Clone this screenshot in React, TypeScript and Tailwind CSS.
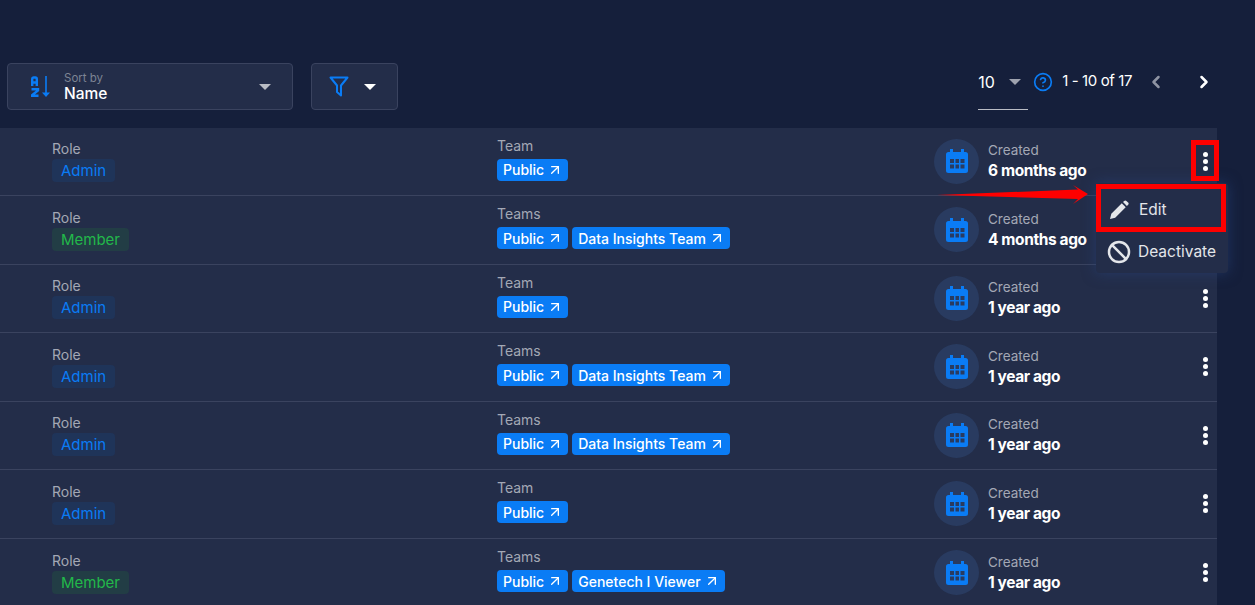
import { ArrowUpRight, ChevronLeft, ChevronRight, CircleHelp, Ban } from 'lucide-react';

const font = "font-['Inter','Noto_Sans',sans-serif]";

type Row = { role: 'Admin' | 'Member'; teams: string[]; created: string };

const rows: Row[] = [
  { role: 'Admin', teams: ['Public'], created: '6 months ago' },
  { role: 'Member', teams: ['Public', 'Data Insights Team'], created: '4 months ago' },
  { role: 'Admin', teams: ['Public'], created: '1 year ago' },
  { role: 'Admin', teams: ['Public', 'Data Insights Team'], created: '1 year ago' },
  { role: 'Admin', teams: ['Public', 'Data Insights Team'], created: '1 year ago' },
  { role: 'Admin', teams: ['Public'], created: '1 year ago' },
  { role: 'Member', teams: ['Public', 'Genetech I Viewer'], created: '1 year ago' },
];

function Caret({ className }: { className: string }) {
  return (
    <svg className={className} width="12" height="6" viewBox="0 0 12 6">
      <path d="M0 0h12L6 6z" fill="currentColor" />
    </svg>
  );
}

function CalendarIcon() {
  return (
    <svg width="22" height="24" viewBox="0 0 22 24">
      <path
        fillRule="evenodd"
        fill="#0a7cf5"
        d="M4 0h3v3h8V0h3v3h1.500A2.500 2.500 0 0 1 22 5.500v16a2.500 2.500 0 0 1-2.500 2.500h-17A2.500 2.500 0 0 1 0 21.500v-16A2.500 2.500 0 0 1 2.500 3H4zM4 10v4h4v-4zM9.500 10v4h3.500v-4zM14.500 10v4h4v-4zM4 15.500v4h4v-4zM9.500 15.500v4h3.500v-4zM14.500 15.500v4h4v-4z"
      />
    </svg>
  );
}

function SortIcon() {
  return (
    <svg width="20" height="22" viewBox="0 0 20 22" fill="none" stroke="#0a7cf5">
      <path d="M1.200 10V3a1.500 1.500 0 0 1 1.500-1.500h1.600A1.500 1.500 0 0 1 5.800 3v7M1.200 6.500h4.600" strokeWidth="2.400" />
      <path d="M0.500 13.200h6.500v1.300L1 19.300v0.500h6.500" strokeWidth="2.400" />
      <path d="M15 0v19" strokeWidth="1.600" />
      <path d="M11 16.500h8l-4 4.500z" fill="#0a7cf5" stroke="none" />
    </svg>
  );
}

function FilterIcon() {
  return (
    <svg width="20" height="21" viewBox="0 0 20 21" fill="none" stroke="#0a7cf5" strokeWidth="2" strokeLinejoin="round">
      <path d="M1.500 1.500h17l-6.500 8v10l-4-3.500v-6.500z" />
    </svg>
  );
}

function PencilIcon() {
  return (
    <svg width="20" height="20" viewBox="0 0 20 20" fill="#e4e6ea">
      <path d="M1 19l1.300-5.200L12.800 3.300l3.900 3.900L6.200 17.700z" />
      <path d="M14 2.100l1.200-1.200a1.600 1.600 0 0 1 2.200 0l1.700 1.700a1.600 1.600 0 0 1 0 2.200L17.900 6z" />
    </svg>
  );
}

function Kebab() {
  return (
    <div className="flex flex-col items-center gap-[2px]">
      <span className="size-[5px] rounded-full bg-white" />
      <span className="size-[5px] rounded-full bg-white" />
      <span className="size-[5px] rounded-full bg-white" />
    </div>
  );
}

function RoleBadge({ role }: { role: Row['role'] }) {
  const tone = role === 'Admin' ? 'bg-[#1f3459] text-[#0a7cf5]' : 'bg-[#223d45] text-[#22b84a]';
  return <span className={`h-[23px] rounded-[4px] px-[9px] text-[15px] leading-[23px] ${tone}`}>{role}</span>;
}

function TeamBadge({ name }: { name: string }) {
  return (
    <span className="flex h-[22px] items-center gap-[3px] rounded-[4px] bg-[#0a7cf5] pl-[6px] pr-[5px] text-[14px] font-medium text-white">
      {name}
      <ArrowUpRight size={16} strokeWidth={2} />
    </span>
  );
}

function TableRow({ row }: { row: Row }) {
  return (
    <div className="flex h-[68.5px] items-center border-b border-[#3a435f] last:border-b-0">
      <div className="w-[497px] pl-[52px]">
        <p className="mb-[1px] text-[14px] leading-[18px] text-[#a3a8b5]">Role</p>
        <div className="flex">
          <RoleBadge role={row.role} />
        </div>
      </div>
      <div className="-mt-[5px] w-[437px]">
        <p className="mb-[4px] text-[14px] leading-[18px] text-[#a3a8b5]">{row.teams.length > 1 ? 'Teams' : 'Team'}</p>
        <div className="flex gap-1">
          {row.teams.map((team) => (
            <TeamBadge key={team} name={team} />
          ))}
        </div>
      </div>
      <div className="flex flex-1 items-center gap-[9px]">
        <div className="flex size-[45px] items-center justify-center rounded-full bg-[#293b60]">
          <CalendarIcon />
        </div>
        <div className="-mt-[1px]">
          <p className="text-[13.500px] leading-[21px] text-[#a3a8b5]">Created</p>
          <p className="text-[15.500px] font-bold leading-[20px] tracking-[-0.4px] text-white">{row.created}</p>
        </div>
      </div>
      <div className="mr-[8px] flex w-[8px] justify-center">
        <Kebab />
      </div>
    </div>
  );
}

export default function App() {
  return (
    <div className={`relative h-[605px] w-[1255px] overflow-hidden bg-[#151f3b] ${font}`}>
      <div className="flex h-[128px] items-start justify-between pl-[7px] pr-[41px] pt-[63px]">
        <div className="flex gap-[18px]">
          <div className="flex h-[47px] w-[286px] items-center rounded-[4px] border border-[#3a435f] bg-[#232d49] pl-[23px] pr-[21px]">
            <SortIcon />
            <div className="ml-[13px] flex-1">
              <p className="text-[11.500px] leading-[14px] text-[#7d8494]">Sort by</p>
              <p className="text-[15.500px] font-medium leading-[18px] text-white">Name</p>
            </div>
            <Caret className="text-[#b9bcc4]" />
          </div>
          <div className="flex h-[47px] w-[87px] items-center rounded-[4px] border border-[#3a435f] bg-[#232d49] pl-[17px]">
            <FilterIcon />
            <Caret className="ml-[15px] text-white" />
          </div>
        </div>
        <div className="flex items-center pt-[6px]">
          <div className="mr-[5px] flex h-[41px] w-[50px] items-start justify-between border-b border-[#b9bcc4] pr-[7px] pt-[3px]">
            <span className="text-[16px] leading-[20px] text-white">10</span>
            <Caret className="mt-[7px] text-[#9ea2ae]" />
          </div>
          <div className="-mt-[16px] flex items-center">
            <CircleHelp size={20} className="text-[#0a7cf5]" />
            <span className="ml-[9px] text-[15px] tracking-[-0.4px] text-white">1 - 10 of 17</span>
            <ChevronLeft size={20} strokeWidth={3} className="ml-[14px] text-[#8f94a3]" />
            <ChevronRight size={20} strokeWidth={3} className="ml-[28px] text-white" />
          </div>
        </div>
      </div>

      <div className="-mt-[0.4px] w-[1217px] bg-[#232d49]">
        {rows.map((row, index) => (
          <TableRow key={index} row={row} />
        ))}
      </div>

      {/* menu and the annotations drawn on the screenshot */}
      <div className="absolute left-[1096px] top-[183px] h-[90px] w-[132px] rounded-[4px] bg-[#232d49] shadow-[0_0_14px_rgba(40,70,130,0.55)]">
        <div className="flex h-[48px] items-center gap-[10px] pl-[13px] pt-[6px] text-[15.500px] text-[#e4e6ea]">
          <PencilIcon />
          Edit
        </div>
        <div className="flex h-[42px] items-center gap-[7px] pl-[11px] text-[15.500px] text-[#e4e6ea]">
          <Ban size={24} strokeWidth={2.500} />
          Deactivate
        </div>
      </div>
      <div className="absolute left-[1191px] top-[140px] h-[41px] w-[28px] border-[5px] border-[#fe0000]" />
      <div className="absolute left-[1096px] top-[184px] h-[48px] w-[130px] border-[5px] border-[#fe0000]" />
      <svg className="absolute left-[930px] top-[180px]" width="160" height="26" viewBox="0 0 160 26">
        <path d="M7 15 L148 9.500 L143 5 L158 14 L143 24 L148 19 Z" fill="#fe0000" />
      </svg>
    </div>
  );
}
